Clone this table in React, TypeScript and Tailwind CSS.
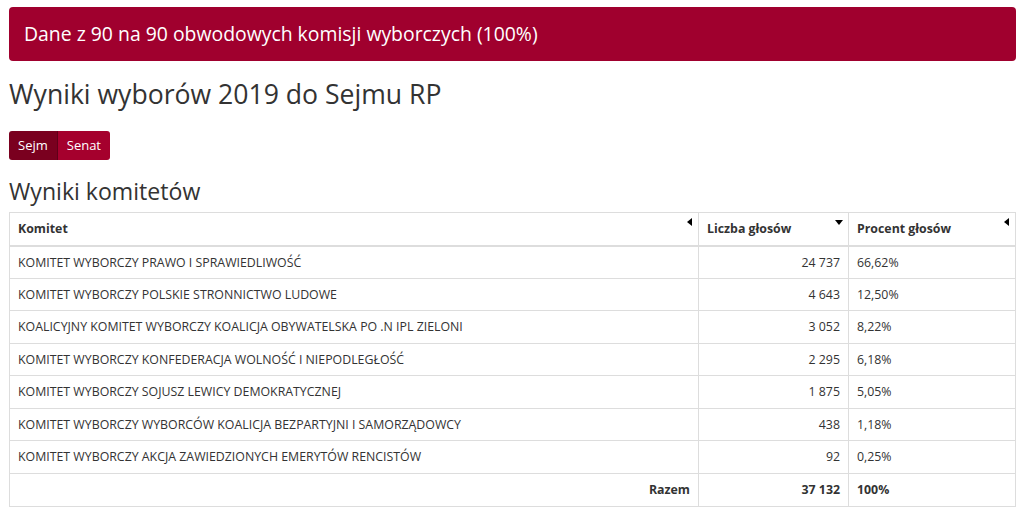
const rows = [
  { name: 'KOMITET WYBORCZY PRAWO I SPRAWIEDLIWOŚĆ', votes: '24 737', pct: '66,62%' },
  { name: 'KOMITET WYBORCZY POLSKIE STRONNICTWO LUDOWE', votes: '4 643', pct: '12,50%' },
  { name: 'KOALICYJNY KOMITET WYBORCZY KOALICJA OBYWATELSKA PO .N IPL ZIELONI', votes: '3 052', pct: '8,22%' },
  { name: 'KOMITET WYBORCZY KONFEDERACJA WOLNOŚĆ I NIEPODLEGŁOŚĆ', votes: '2 295', pct: '6,18%' },
  { name: 'KOMITET WYBORCZY SOJUSZ LEWICY DEMOKRATYCZNEJ', votes: '1 875', pct: '5,05%' },
  { name: 'KOMITET WYBORCZY WYBORCÓW KOALICJA BEZPARTYJNI I SAMORZĄDOWCY', votes: '438', pct: '1,18%' },
  { name: 'KOMITET WYBORCZY AKCJA ZAWIEDZIONYCH EMERYTÓW RENCISTÓW', votes: '92', pct: '0,25%' },
]

function SortLeft() {
  return <span className="absolute top-[5px] right-[6px] w-0 h-0 border-y-[4px] border-y-transparent border-r-[5px] border-r-black" />
}

function SortDown() {
  return <span className="absolute top-[7px] right-[5px] w-0 h-0 border-x-[4px] border-x-transparent border-t-[5px] border-t-black" />
}

export default function App() {
  return (
    <div className="w-[1024px] h-[510px] bg-white px-[9px] pt-[7px] text-[#333] overflow-hidden" style={{ fontFamily: '"Open Sans", sans-serif' }}>
      {/* banner */}
      <div className="h-[54px] rounded-[4px] bg-[#a0002e] text-white text-[19.4px] flex items-center px-[15px] mr-[-1px]">
        Dane z 90 na 90 obwodowych komisji wyborczych (100%)
      </div>

      <h1 className="text-[26.6px] leading-[34px] mt-[16px] text-[#333]">Wyniki wyborów 2019 do Sejmu RP</h1>

      <div className="flex mt-[20px] h-[29px] text-[13px] text-white">
        <button className="px-[9px] bg-[#7a001f] rounded-l-[3px] border-r border-[#5f0018]">Sejm</button>
        <button className="px-[9px] bg-[#a5002d] rounded-r-[3px]">Senat</button>
      </div>

      <h2 className="text-[23.1px] leading-[30px] mt-[16px] text-[#333]">Wyniki komitetów</h2>

      <table className="mt-[6px] w-[1007px] border-collapse text-[12.35px] border border-[#ddd]">
        <thead>
          <tr className="h-[33px] border-b-2 border-[#ddd]">
            <th className="relative text-left font-bold px-[8px] pt-[1px] w-[689px] border border-[#ddd]">Komitet<SortLeft /></th>
            <th className="relative text-left font-bold px-[8px] pt-[1px] w-[150px] border border-[#ddd]">Liczba głosów<SortDown /></th>
            <th className="relative text-left font-bold px-[8px] pt-[1px] border border-[#ddd]">Procent głosów<SortLeft /></th>
          </tr>
        </thead>
        <tbody>
          {rows.map((r) => (
            <tr key={r.name} className="h-[32.5px]">
              <td className="px-[8px] pt-[2px] border border-[#ddd]">{r.name}</td>
              <td className="px-[8px] pt-[2px] text-right border border-[#ddd]">{r.votes}</td>
              <td className="px-[8px] pt-[2px] border border-[#ddd]">{r.pct}</td>
            </tr>
          ))}
          <tr className="h-[33px] font-bold">
            <td className="px-[8px] pt-[2px] text-right border border-[#ddd]">Razem</td>
            <td className="px-[8px] pt-[2px] text-right border border-[#ddd]">37 132</td>
            <td className="px-[8px] pt-[2px] border border-[#ddd]">100%</td>
          </tr>
        </tbody>
      </table>
    </div>
  )
}
